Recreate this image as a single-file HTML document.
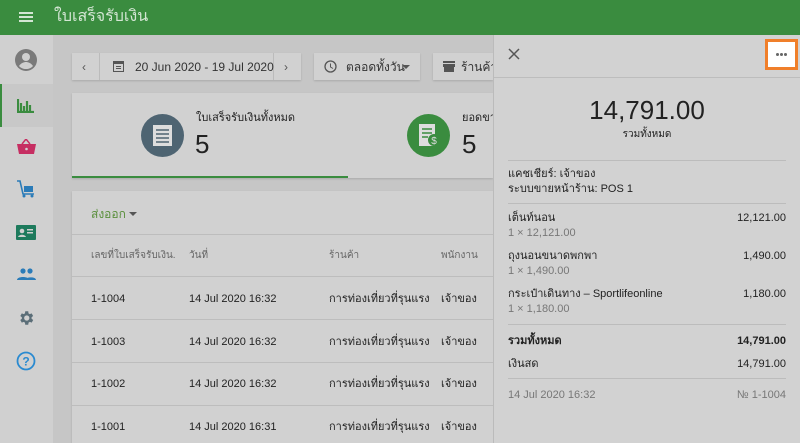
<!DOCTYPE html>
<html><head><meta charset="utf-8"><style>
*{box-sizing:border-box;margin:0;padding:0}
html,body{width:800px;height:443px;overflow:hidden}
body{background:#c6c6c6;font-family:"Liberation Sans","Noto Sans CJK SC",sans-serif;position:relative;color:#222}
.hdr{position:absolute;left:0;top:0;width:800px;height:35px;background:#3a8c3f;color:#d4e6d4;font-size:16px}
.side{position:absolute;left:0;top:35px;width:53px;height:408px;background:#d0d0d0}
.ic{position:absolute;left:14px}
.box{position:absolute;background:#d1d1d1;box-shadow:0 1px 2px rgba(0,0,0,.15)}
.t{position:absolute;white-space:nowrap;line-height:14px}
.panel{position:absolute;left:493px;top:35px;width:307px;height:408px;background:#d2d2d2;border-left:1px solid #bbb}
.hl{position:absolute;left:14px;right:14px;height:1px;background:#bcbcbc}
.p{position:absolute;font-size:11px;white-space:nowrap;line-height:14px}
.r{right:14px;text-align:right}
.g{color:#777}
</style></head><body>
<div class="hdr">
 <div style="position:absolute;left:19px;top:12px;width:14px;height:2px;background:#d4e6d4;box-shadow:0 4px 0 #d4e6d4,0 8px 0 #d4e6d4"></div>
 <div class="t" style="left:54px;top:8px;font-size:16px;line-height:18px">ใบเสร็จรับเงิน</div>
</div>
<div class="side">
 <svg class="ic" style="top:13px" width="24" height="24" viewBox="0 0 24 24"><circle cx="12" cy="12" r="11" fill="#7a7a7a"/><circle cx="12" cy="9" r="4" fill="#d0d0d0"/><path d="M5 18c2-3 5-4 7-4s5 1 7 4c-2 2-4 3-7 3s-5-1-7-3z" fill="#d0d0d0"/></svg>
 <div style="position:absolute;left:0;top:49px;width:53px;height:43px;background:#c8c8c8;border-left:2px solid #3a8c3f"></div>
 <svg class="ic" style="top:62px;left:17px" width="18" height="16"><path d="M1 2v13h16M4 6v8M7 9v5M10 4v10M13 8v6" stroke="#3a8c3f" stroke-width="2.2" fill="none"/></svg>
 <svg class="ic" style="top:104px;left:17px" width="19" height="16"><path d="M0 5h19l-2 10H2z" fill="#c62e62"/><path d="M5 5l4-5 4 5" stroke="#c62e62" stroke-width="1.5" fill="none"/><circle cx="9.5" cy="10" r="1.3" fill="#d0d0d0"/></svg>
 <svg class="ic" style="top:145px;left:17px" width="18" height="18"><path d="M0 1h3l3 13h11" stroke="#2a7bb8" stroke-width="1.6" fill="none"/><rect x="7" y="6" width="9" height="6" fill="#2a7bb8"/><circle cx="7" cy="16" r="1.5" fill="#2a7bb8"/><circle cx="15" cy="16" r="1.5" fill="#2a7bb8"/></svg>
 <svg class="ic" style="top:190px;left:16px" width="20" height="15"><rect width="20" height="15" rx="1" fill="#1d7a5c"/><circle cx="6" cy="6" r="2.3" fill="#d0d0d0"/><path d="M2 12c1-3 7-3 8 0z" fill="#d0d0d0"/><rect x="11" y="4" width="6" height="1.5" fill="#d0d0d0"/><rect x="11" y="7" width="6" height="1.5" fill="#d0d0d0"/></svg>
 <svg class="ic" style="top:233px;left:17px" width="19" height="12"><circle cx="6" cy="3" r="2.6" fill="#2a7bb8"/><circle cx="13" cy="3" r="2.6" fill="#2a7bb8"/><path d="M0 12c0-4 12-4 12 0zM8 12c0-3 11-4 11 0z" fill="#2a7bb8"/></svg>
 <svg class="ic" style="top:274px;left:17px" width="18" height="18" viewBox="0 0 24 24"><path fill="#5b6e78" d="M19.4 13a7.5 7.5 0 000-2l2.1-1.6-2-3.5-2.5 1a7 7 0 00-1.700-1L15 3h-4l-.4 2.9a7 7 0 00-1.7 1l-2.5-1-2 3.5L6.5 11a7.5 7.5 0 000 2l-2.1 1.6 2 3.5 2.5-1a7 7 0 001.7 1L11 21h4l.4-2.9a7 7 0 001.7-1l2.5 1 2-3.5zM13 15.5a3.5 3.5 0 110-7 3.5 3.5 0 010 7z"/></svg>
 <svg class="ic" style="top:316px;left:16px" width="20" height="20"><circle cx="10" cy="10" r="8.5" stroke="#2a8ad0" stroke-width="1.8" fill="none"/><text x="10" y="14.5" font-size="12" font-family="Liberation Sans" text-anchor="middle" fill="#2a8ad0" font-weight="bold">?</text></svg>
</div>
<!-- filters -->
<div class="box" style="left:72px;top:53px;width:229px;height:27px"></div>
<div style="position:absolute;left:99px;top:53px;width:1px;height:27px;background:#bbb"></div>
<div style="position:absolute;left:273px;top:53px;width:1px;height:27px;background:#bbb"></div>
<div class="t" style="left:82px;top:60px;font-size:12px;color:#555">‹</div>
<div class="t" style="left:284px;top:60px;font-size:12px;color:#555">›</div>
<svg style="position:absolute;left:113px;top:60px" width="11" height="12"><rect x=".5" y="1.5" width="10" height="10" fill="none" stroke="#555"/><rect x="0" y="1" width="11" height="3" fill="#555"/><rect x="3" y="6" width="5" height="1" fill="#555"/><rect x="3" y="8" width="5" height="1" fill="#555"/></svg>
<div class="t" style="left:135px;top:60px;font-size:12px;color:#333">20 Jun 2020 - 19 Jul 2020</div>
<div class="box" style="left:314px;top:53px;width:106px;height:27px"></div>
<svg style="position:absolute;left:324px;top:60px" width="13" height="13"><circle cx="6.5" cy="6.5" r="5.5" fill="none" stroke="#555" stroke-width="1.3"/><path d="M6.5 3.5v3.5l2.5 1.5" stroke="#555" fill="none"/></svg>
<div class="t" style="left:346px;top:60px;font-size:12px;color:#333">ตลอดทั้งวัน</div>
<svg style="position:absolute;left:402px;top:65px" width="8" height="4"><path d="M0 0h8L4 4z" fill="#555"/></svg>
<div class="box" style="left:433px;top:53px;width:60px;height:27px"></div>
<svg style="position:absolute;left:443px;top:61px" width="12" height="11"><rect x="0" y="0" width="12" height="2" fill="#555"/><rect x="0" y="3" width="12" height="3" fill="#555"/><rect x="1" y="6" width="10" height="5" fill="#555"/></svg>
<div class="t" style="left:461px;top:60px;font-size:12px;color:#333">ร้านค้าท</div>
<!-- summary -->
<div class="box" style="left:72px;top:93px;width:421px;height:85px"></div>
<div style="position:absolute;left:72px;top:176px;width:276px;height:2px;background:#3a8c3f"></div>
<div style="position:absolute;left:141px;top:114px;width:43px;height:43px;border-radius:50%;background:#4e6472"></div>
<svg style="position:absolute;left:152px;top:124px" width="21" height="23"><path d="M1 1h19v21H1z" fill="#ddd"/><path d="M4 6h13M4 10h13M4 14h13M4 18h13" stroke="#4e6472" stroke-width="1.6"/></svg>
<div class="t" style="left:196px;top:111px;font-size:11px">ใบเสร็จรับเงินทั้งหมด</div>
<div class="t" style="left:195px;top:130px;font-size:26px;line-height:28px">5</div>
<div style="position:absolute;left:407px;top:114px;width:43px;height:43px;border-radius:50%;background:#3a8c3f"></div>
<svg style="position:absolute;left:418px;top:123px" width="22" height="25"><path d="M1 1h16v22H1z" fill="#ddd"/><path d="M4 6h10M4 10h10M4 14h6" stroke="#3a8c3f" stroke-width="1.6"/><circle cx="16" cy="17" r="6" fill="#3a8c3f"/><text x="16" y="21" font-size="10" text-anchor="middle" fill="#ddd" font-family="Liberation Sans">$</text></svg>
<div class="t" style="left:462px;top:111px;font-size:11px">ยอดขา</div>
<div class="t" style="left:462px;top:130px;font-size:26px;line-height:28px">5</div>
<!-- table -->
<div class="box" style="left:72px;top:191px;width:421px;height:260px"></div>
<div class="t" style="left:91px;top:207px;font-size:12px;color:#5a8f3c">ส่งออก</div>
<svg style="position:absolute;left:129px;top:212px" width="8" height="4"><path d="M0 0h8L4 4z" fill="#555"/></svg>
<div style="position:absolute;left:72px;top:234px;width:421px;height:1px;background:#bdbdbd"></div>
<div class="t" style="left:91px;top:249px;font-size:10px;color:#666">เลขที่ใบเสร็จรับเงิน.</div>
<div class="t" style="left:189px;top:249px;font-size:10px;color:#666">วันที่</div>
<div class="t" style="left:329px;top:249px;font-size:10px;color:#666">ร้านค้า</div>
<div class="t" style="left:441px;top:249px;font-size:10px;color:#666">พนักงาน</div>
<div style="position:absolute;left:72px;top:276px;width:421px;height:1px;background:#bdbdbd"></div>
<div style="position:absolute;left:72px;top:319px;width:421px;height:1px;background:#bdbdbd"></div>
<div style="position:absolute;left:72px;top:362px;width:421px;height:1px;background:#bdbdbd"></div>
<div style="position:absolute;left:72px;top:405px;width:421px;height:1px;background:#bdbdbd"></div>
<div class="t" style="left:91px;top:292px;font-size:11px">1-1004</div><div class="t" style="left:189px;top:292px;font-size:11px">14 Jul 2020 16:32</div><div class="t" style="left:329px;top:292px;font-size:11px">การท่องเที่ยวที่รุนแรง</div><div class="t" style="left:441px;top:292px;font-size:11px">เจ้าของ</div>
<div class="t" style="left:91px;top:335px;font-size:11px">1-1003</div><div class="t" style="left:189px;top:335px;font-size:11px">14 Jul 2020 16:32</div><div class="t" style="left:329px;top:335px;font-size:11px">การท่องเที่ยวที่รุนแรง</div><div class="t" style="left:441px;top:335px;font-size:11px">เจ้าของ</div>
<div class="t" style="left:91px;top:377px;font-size:11px">1-1002</div><div class="t" style="left:189px;top:377px;font-size:11px">14 Jul 2020 16:32</div><div class="t" style="left:329px;top:377px;font-size:11px">การท่องเที่ยวที่รุนแรง</div><div class="t" style="left:441px;top:377px;font-size:11px">เจ้าของ</div>
<div class="t" style="left:91px;top:420px;font-size:11px">1-1001</div><div class="t" style="left:189px;top:420px;font-size:11px">14 Jul 2020 16:31</div><div class="t" style="left:329px;top:420px;font-size:11px">การท่องเที่ยวที่รุนแรง</div><div class="t" style="left:441px;top:420px;font-size:11px">เจ้าของ</div>
<!-- panel -->
<div class="panel">
 <svg style="position:absolute;left:14px;top:13px" width="12" height="12"><path d="M1 1l10 10M11 1L1 11" stroke="#555" stroke-width="1.5"/></svg>
 <div style="position:absolute;left:271px;top:4px;width:33px;height:31px;border:3px solid #f07f2a;background:#fff"></div>
 <div style="position:absolute;left:282px;top:18px;width:3px;height:3px;border-radius:50%;background:#666;box-shadow:4px 0 0 #666,8px 0 0 #666"></div>
 <div style="position:absolute;left:0;right:0;top:42px;height:1px;background:#bdbdbd"></div>
 <div class="p" style="left:0;right:0;top:60px;text-align:center;font-size:26px;line-height:30px">14,791.00</div>
 <div class="p" style="left:0;right:0;top:93px;text-align:center;font-size:10px">รวมทั้งหมด</div>
 <div class="hl" style="top:125px"></div>
 <div class="p" style="left:14px;top:132px">แคชเชียร์: เจ้าของ</div>
 <div class="p" style="left:14px;top:147px">ระบบขายหน้าร้าน: POS 1</div>
 <div class="hl" style="top:168px"></div>
 <div class="p" style="left:14px;top:176px">เต็นท์นอน</div><div class="p r" style="top:176px">12,121.00</div>
 <div class="p g" style="left:14px;top:191px">1 × 12,121.00</div>
 <div class="p" style="left:14px;top:214px">ถุงนอนขนาดพกพา</div><div class="p r" style="top:214px">1,490.00</div>
 <div class="p g" style="left:14px;top:229px">1 × 1,490.00</div>
 <div class="p" style="left:14px;top:252px">กระเป๋าเดินทาง – Sportlifeonline</div><div class="p r" style="top:252px">1,180.00</div>
 <div class="p g" style="left:14px;top:267px">1 × 1,180.00</div>
 <div class="hl" style="top:289px"></div>
 <div class="p" style="left:14px;top:299px;font-weight:bold">รวมทั้งหมด</div><div class="p r" style="top:299px;font-weight:bold">14,791.00</div>
 <div class="p" style="left:14px;top:322px">เงินสด</div><div class="p r" style="top:322px">14,791.00</div>
 <div class="hl" style="top:343px"></div>
 <div class="p g" style="left:14px;top:353px">14 Jul 2020 16:32</div><div class="p r g" style="top:353px">№ 1-1004</div>
</div>
</body></html>
